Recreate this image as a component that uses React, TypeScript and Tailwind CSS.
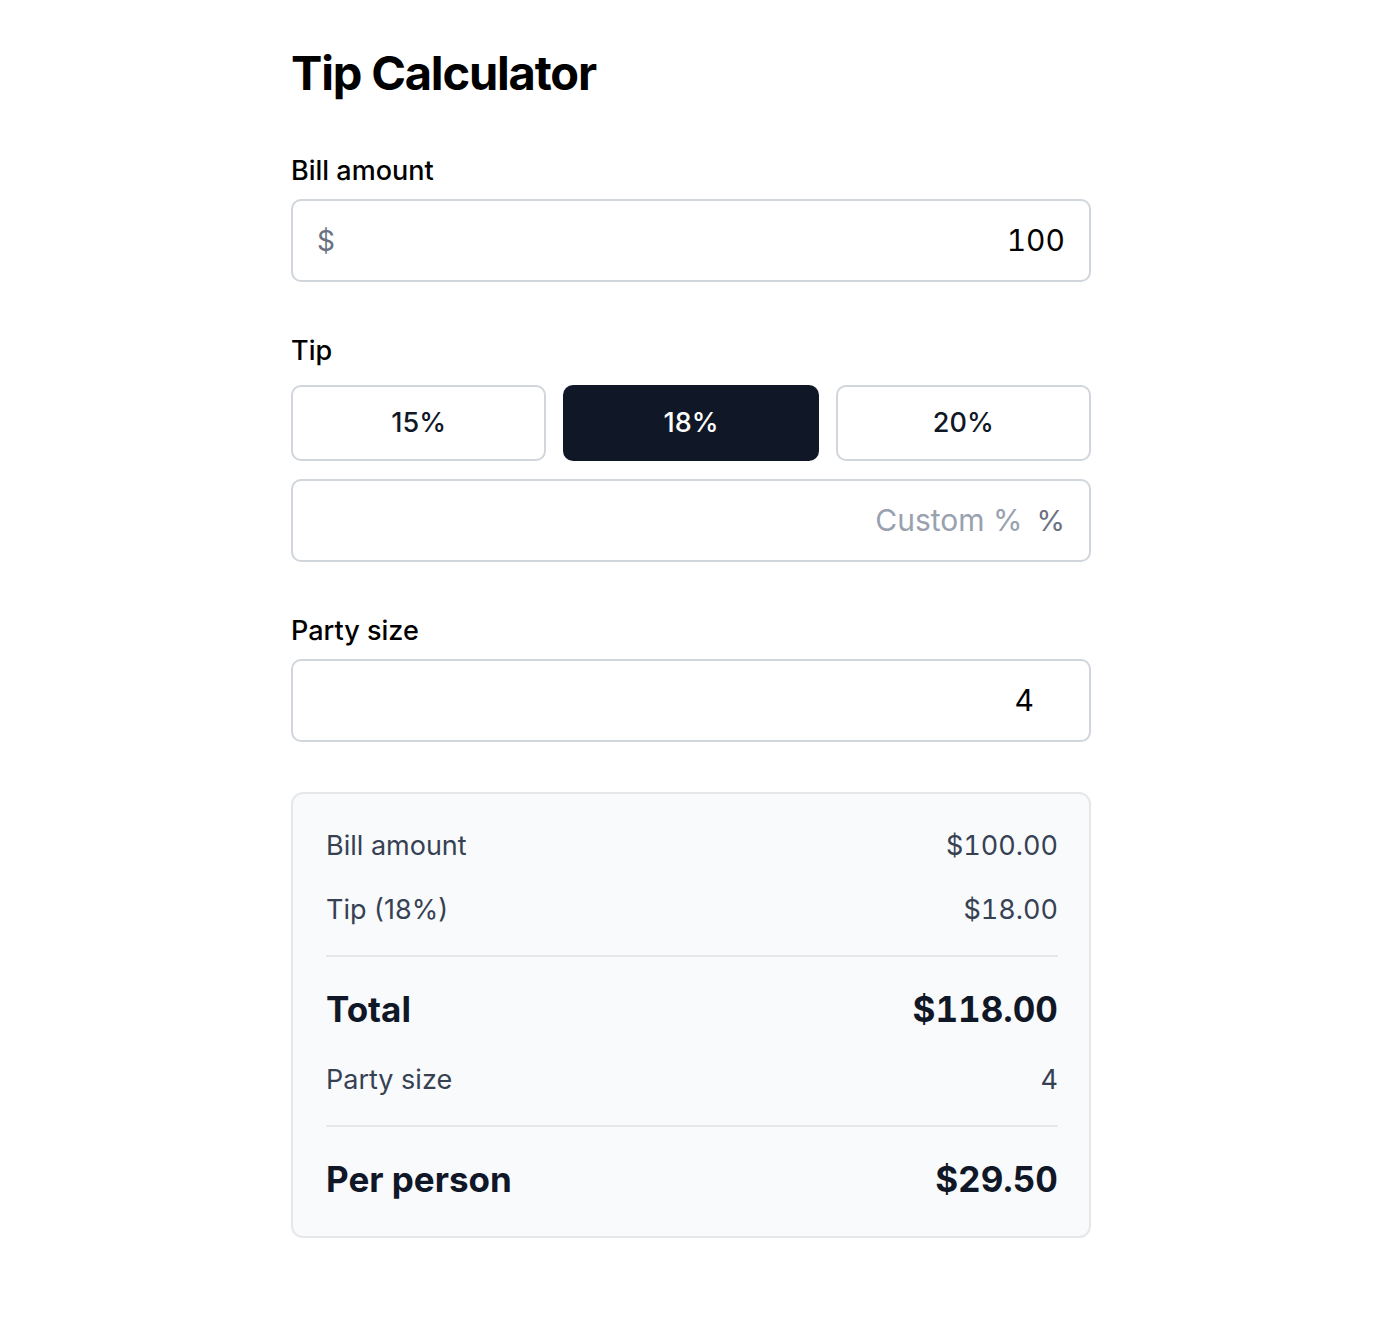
import React, { useState } from 'react';

const TIP_OPTIONS = [15, 18, 20];

function fmt(n: number) {
  return '$' + n.toFixed(2);
}

export default function App() {
  const [bill, setBill] = useState('100');
  const [tip, setTip] = useState(18);
  const [custom, setCustom] = useState('');
  const [party, setParty] = useState('4');

  const billNum = parseFloat(bill) || 0;
  const tipPct = custom !== '' ? parseFloat(custom) || 0 : tip;
  const partyNum = Math.max(1, parseInt(party) || 1);
  const tipAmount = (billNum * tipPct) / 100;
  const total = billNum + tipAmount;

  return (
    <div className="min-h-screen bg-white font-['Inter','Noto_Sans',sans-serif] text-black">
      <div className="mx-auto w-[800px] pt-[49px] pb-[80px]">
        <h1 className="text-[47px] leading-[48px] font-bold tracking-tight">Tip Calculator</h1>

        {/* Bill amount */}
        <section className="mt-[56px]">
          <label className="block text-[27px] leading-[36px] font-medium mb-[10px]">Bill amount</label>
          <div className="flex h-[83px] items-center rounded-[10px] border-2 border-gray-300 px-[24px]">
            <span className="text-[28px] text-gray-500">$</span>
            <input
              value={bill}
              onChange={e => setBill(e.target.value)}
              className="ml-3 min-w-0 flex-1 bg-transparent text-right text-[30px] tabular-nums text-black outline-none"
            />
          </div>
        </section>

        {/* Tip */}
        <section className="mt-[51px]">
          <label className="block text-[27px] leading-[36px] font-medium mb-[16px]">Tip</label>
          <div className="grid grid-cols-3 gap-[17px]">
            {TIP_OPTIONS.map(p => {
              const active = custom === '' && tip === p;
              return (
                <button
                  key={p}
                  onClick={() => {
                    setTip(p);
                    setCustom('');
                  }}
                  className={
                    active
                      ? 'h-[76px] rounded-[10px] border-2 border-gray-900 bg-gray-900 text-[27px] font-medium text-white'
                      : 'h-[76px] rounded-[10px] border-2 border-gray-300 bg-white text-[27px] font-medium text-gray-900'
                  }
                >
                  {p}%
                </button>
              );
            })}
          </div>
          <div className="mt-[18px] flex h-[83px] items-center rounded-[10px] border-2 border-gray-300 px-[24px]">
            <input
              value={custom}
              onChange={e => setCustom(e.target.value)}
              placeholder="Custom %"
              className="min-w-0 flex-1 bg-transparent text-right text-[30px] text-black outline-none placeholder:text-gray-400"
            />
            <span className="ml-[14px] text-[29px] text-gray-500">%</span>
          </div>
        </section>

        {/* Party size */}
        <section className="mt-[51px]">
          <label className="block text-[27px] leading-[36px] font-medium mb-[10px]">Party size</label>
          <div className="flex h-[83px] items-center rounded-[10px] border-2 border-gray-300 px-[24px]">
            <input
              value={party}
              onChange={e => setParty(e.target.value)}
              className="min-w-0 flex-1 bg-transparent text-right text-[30px] tabular-nums text-black outline-none pr-[31px]"
            />
          </div>
        </section>

        {/* Summary */}
        <div className="mt-[50px] flex flex-col gap-[26px] rounded-[12px] border-2 border-gray-200 bg-gray-50 pl-[33px] pr-[31px] pt-[33px] pb-[31px]">
          <div className="flex justify-between text-[27px] leading-[38px] text-gray-700">
            <span>Bill amount</span>
            <span className="tabular-nums">{fmt(billNum)}</span>
          </div>
          <div className="flex justify-between text-[27px] leading-[38px] text-gray-700">
            <span>Tip ({tipPct}%)</span>
            <span className="tabular-nums">{fmt(tipAmount)}</span>
          </div>
          <div className="h-[2px] bg-gray-200" />
          <div className="flex justify-between text-[35px] leading-[52px] font-bold text-gray-900">
            <span>Total</span>
            <span className="tabular-nums">{fmt(total)}</span>
          </div>
          <div className="flex justify-between text-[27px] leading-[38px] text-gray-700">
            <span>Party size</span>
            <span className="tabular-nums">{partyNum}</span>
          </div>
          <div className="h-[2px] bg-gray-200" />
          <div className="flex justify-between text-[35px] leading-[52px] font-bold text-gray-900">
            <span>Per person</span>
            <span className="tabular-nums">{fmt(total / partyNum)}</span>
          </div>
        </div>
      </div>
    </div>
  );
}
